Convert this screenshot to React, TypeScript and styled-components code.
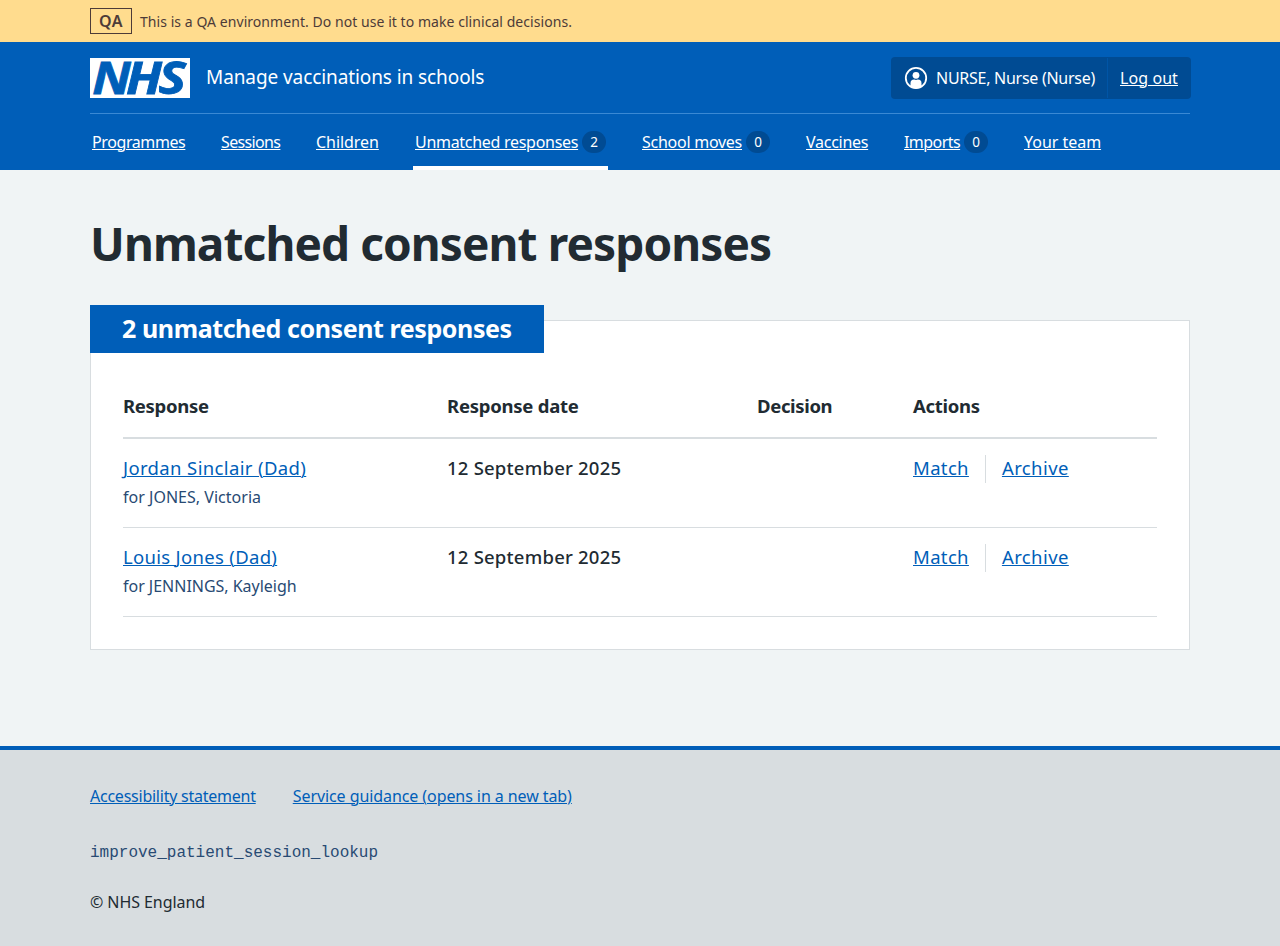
import React from "react";
import styled, { createGlobalStyle } from "styled-components";

const blue = "#005eb8";
const darkBlue = "#004b93";
const ink = "#212b32";
const secondary = "#284a73";
const rule = "#d8dde0";

const GlobalStyle = createGlobalStyle`
  *, *::before, *::after { box-sizing: border-box; }
  body {
    margin: 0;
    background: #f0f4f5;
    color: ${ink};
    font-family: "Noto Sans", sans-serif;
    font-size: 16px;
    line-height: 24px;
  }
`;

const Page = styled.div`
  display: flex;
  flex-direction: column;
  min-height: 100vh;
`;

const Container = styled.div`
  width: 1100px;
  margin: 0 auto;
`;

const Label = styled.span<{ $track?: number }>`
  letter-spacing: ${(p) => p.$track ?? 0}px;
  white-space: nowrap;
`;

const Link = styled.a<{ $track?: number }>`
  color: ${blue};
  font-weight: 400;
  letter-spacing: ${(p) => p.$track ?? 0}px;
  text-decoration: underline;
  text-decoration-thickness: 1px;
  text-underline-offset: 1px;
  white-space: nowrap;
`;

const LightLink = styled(Link)`
  color: #fff;
`;

const Banner = styled.div`
  height: 42px;
  padding: 8px 0;
  background: #ffdc8e;
  color: #4d3b38;
`;

const BannerRow = styled(Container)`
  display: flex;
  gap: 8px;
`;

const EnvironmentTag = styled.strong`
  width: 42px;
  height: 26px;
  border: 1px solid currentColor;
  font-weight: 600;
  letter-spacing: 0.4px;
  text-align: center;
`;

const BannerText = styled(Label)`
  padding-top: 2px;
  font-size: 14px;
`;

const Header = styled.header`
  background: ${blue};
  color: #fff;
`;

const HeaderTop = styled.div`
  display: flex;
  align-items: center;
  height: 72px;
  border-bottom: 1px solid #3a89d4;
`;

const Logo = styled.svg`
  display: block;
  margin-right: 16px;
  overflow: visible;
  background: #fff;
`;

const LogoLetter = styled.text`
  fill: ${blue};
  stroke: ${blue};
  stroke-width: 0.8px;
  font-family: "Open Sans", sans-serif;
  font-size: 45px;
  font-style: italic;
  font-weight: 700;
`;

const ServiceName = styled(Label)`
  padding-bottom: 2px;
  font-size: 19px;
`;

const Account = styled.div`
  display: flex;
  align-items: center;
  height: 42px;
  margin: 0 -1px 0 auto;
  border-radius: 4px;
  background: ${darkBlue};
`;

const AccountUser = styled.div`
  display: flex;
  align-items: center;
  gap: 8px;
  width: 217px;
  height: 40px;
  padding-left: 13px;
  border-right: 1px solid #0055a6;
`;

const AccountAction = styled.div`
  width: 83px;
  padding-left: 12px;
`;

const Nav = styled.nav`
  display: flex;
  height: 56px;
`;

const NavItem = styled.div<{ $active?: boolean; $width: number }>`
  display: flex;
  gap: 4px;
  width: ${(p) => p.$width}px;
  margin-right: 32px;
  padding: 16px 2px 0;
  border-bottom: 4px solid ${(p) => (p.$active ? "#fff" : "transparent")};
`;

const Count = styled.span`
  width: 24px;
  height: 22px;
  margin-top: 1px;
  border-radius: 11px;
  background: ${darkBlue};
  font-size: 13.5px;
  line-height: 23px;
  text-align: center;
`;

const Main = styled(Container).attrs({ as: "main" })`
  padding-top: 48px;
`;

const Title = styled.h1`
  margin: 0;
  font-size: 46px;
  font-weight: 700;
  line-height: 50px;
  letter-spacing: -0.9px;
`;

const Card = styled.section`
  margin-top: 52px;
  padding: 0 32px 32px;
  border: 1px solid ${rule};
  background: #fff;
`;

const CardHeading = styled.h2`
  width: 454px;
  height: 48px;
  margin: -16px 0 40px -33px;
  padding: 0 32px;
  background: ${blue};
  color: #fff;
  font-size: 25px;
  font-weight: 700;
  line-height: 47px;
  letter-spacing: -0.41px;
  white-space: nowrap;
`;

const Table = styled.table`
  width: 1034px;
  border-spacing: 0;
  table-layout: fixed;
  font-size: 18.5px;
  font-weight: 500;
  line-height: 25px;
`;

const HeadCell = styled.th<{ $width: number; $track: number }>`
  width: ${(p) => p.$width}px;
  padding: 0 0 19px;
  border-bottom: 2px solid ${rule};
  font-weight: 700;
  letter-spacing: ${(p) => p.$track}px;
  text-align: left;
`;

const Cell = styled.td`
  height: 89px;
  padding: 16px 0 0;
  border-bottom: 1px solid ${rule};
  vertical-align: top;
`;

const Child = styled.div<{ $track: number }>`
  margin-top: 5px;
  color: ${secondary};
  font-size: 16px;
  font-weight: 400;
  line-height: 24px;
  letter-spacing: ${(p) => p.$track}px;
`;

const Actions = styled.div`
  display: flex;
  height: 28px;
`;

const Action = styled.div`
  & + & {
    margin-left: 16px;
    padding-left: 16px;
    border-left: 1px solid ${rule};
  }
`;

const Footer = styled.footer`
  height: 200px;
  margin-top: auto;
  padding-top: 34px;
  border-top: 4px solid ${blue};
  background: ${rule};
`;

const FooterLinks = styled.div`
  display: flex;
  gap: 37px;
`;

const Version = styled.div`
  margin-top: 33px;
  color: ${secondary};
  font-family: "Liberation Mono", monospace;
`;

const Copyright = styled.div`
  margin-top: 25px;
  letter-spacing: -0.07px;
`;

const navItems = [
  { label: "Programmes", width: 97, track: -0.4 },
  { label: "Sessions", width: 63, track: -0.64 },
  { label: "Children", width: 67, track: -0.06 },
  { label: "Unmatched responses", width: 195, track: -0.29, count: 2, active: true },
  { label: "School moves", width: 132, track: -0.26, count: 0 },
  { label: "Vaccines", width: 66, track: -0.27 },
  { label: "Imports", width: 88, track: -0.55, count: 0 },
  { label: "Your team", width: 81, track: -0.03 },
];

const columns = [
  { label: "Response", width: 324, track: -0.3 },
  { label: "Response date", width: 310, track: -0.24 },
  { label: "Decision", width: 156, track: -0.35 },
  { label: "Actions", width: 244, track: -0.3 },
];

const responses = [
  { parent: "Jordan Sinclair (Dad)", parentTrack: 0.37, child: "for JONES, Victoria", childTrack: 0.02 },
  { parent: "Louis Jones (Dad)", parentTrack: 0.31, child: "for JENNINGS, Kayleigh", childTrack: -0.02 },
];

function NhsLogo() {
  return (
    <Logo width="100" height="40" viewBox="0 0 100 40" role="img" aria-label="NHS">
      <LogoLetter x="2.2" y="36" textLength="38.5" lengthAdjust="spacingAndGlyphs">N</LogoLetter>
      <LogoLetter x="36" y="36" textLength="36" lengthAdjust="spacingAndGlyphs">H</LogoLetter>
      <LogoLetter x="68.5" y="36" textLength="27.5" lengthAdjust="spacingAndGlyphs">S</LogoLetter>
    </Logo>
  );
}

function UserIcon() {
  return (
    <svg width="24" height="24" viewBox="0 0 24 24" aria-hidden="true">
      <clipPath id="user-clip">
        <circle cx="12" cy="12" r="10.5" />
      </clipPath>
      <circle cx="12" cy="12" r="10.2" fill="none" stroke="#fff" strokeWidth="1.8" />
      <circle cx="12" cy="9.3" r="3.4" fill="#fff" />
      <path
        d="M6.5 24V17.2a3.6 3.6 0 0 1 3.6-3.6h.2a3.6 3.6 0 0 0 3.4 0h.2a3.6 3.6 0 0 1 3.6 3.6V24z"
        fill="#fff"
        clipPath="url(#user-clip)"
      />
    </svg>
  );
}

export default function App() {
  return (
    <Page>
      <GlobalStyle />
      <Banner>
        <BannerRow>
          <EnvironmentTag>QA</EnvironmentTag>
          <BannerText $track={0.055}>
            This is a QA environment. Do not use it to make clinical decisions.
          </BannerText>
        </BannerRow>
      </Banner>
      <Header>
        <Container>
          <HeaderTop>
            <NhsLogo />
            <ServiceName $track={-0.09}>Manage vaccinations in schools</ServiceName>
            <Account>
              <AccountUser>
                <UserIcon />
                <Label $track={-0.27}>NURSE, Nurse (Nurse)</Label>
              </AccountUser>
              <AccountAction>
                <LightLink $track={0.08}>Log out</LightLink>
              </AccountAction>
            </Account>
          </HeaderTop>
          <Nav>
            {navItems.map((item) => (
              <NavItem key={item.label} $active={item.active} $width={item.width}>
                <LightLink $track={item.track}>{item.label}</LightLink>
                {item.count !== undefined && <Count>{item.count}</Count>}
              </NavItem>
            ))}
          </Nav>
        </Container>
      </Header>
      <Main>
        <Title>Unmatched consent responses</Title>
        <Card>
          <CardHeading>2 unmatched consent responses</CardHeading>
          <Table>
            <thead>
              <tr>
                {columns.map((column) => (
                  <HeadCell key={column.label} $width={column.width} $track={column.track}>
                    {column.label}
                  </HeadCell>
                ))}
              </tr>
            </thead>
            <tbody>
              {responses.map((response) => (
                <tr key={response.parent}>
                  <Cell>
                    <Link $track={response.parentTrack}>{response.parent}</Link>
                    <Child $track={response.childTrack}>{response.child}</Child>
                  </Cell>
                  <Cell>
                    <Label $track={0.22}>12 September 2025</Label>
                  </Cell>
                  <Cell />
                  <Cell>
                    <Actions>
                      <Action>
                        <Link $track={0.35}>Match</Link>
                      </Action>
                      <Action>
                        <Link $track={0.41}>Archive</Link>
                      </Action>
                    </Actions>
                  </Cell>
                </tr>
              ))}
            </tbody>
          </Table>
        </Card>
      </Main>
      <Footer>
        <Container>
          <FooterLinks>
            <Link $track={-0.24}>Accessibility statement</Link>
            <Link $track={-0.08}>Service guidance (opens in a new tab)</Link>
          </FooterLinks>
          <Version>improve_patient_session_lookup</Version>
          <Copyright>© NHS England</Copyright>
        </Container>
      </Footer>
    </Page>
  );
}
